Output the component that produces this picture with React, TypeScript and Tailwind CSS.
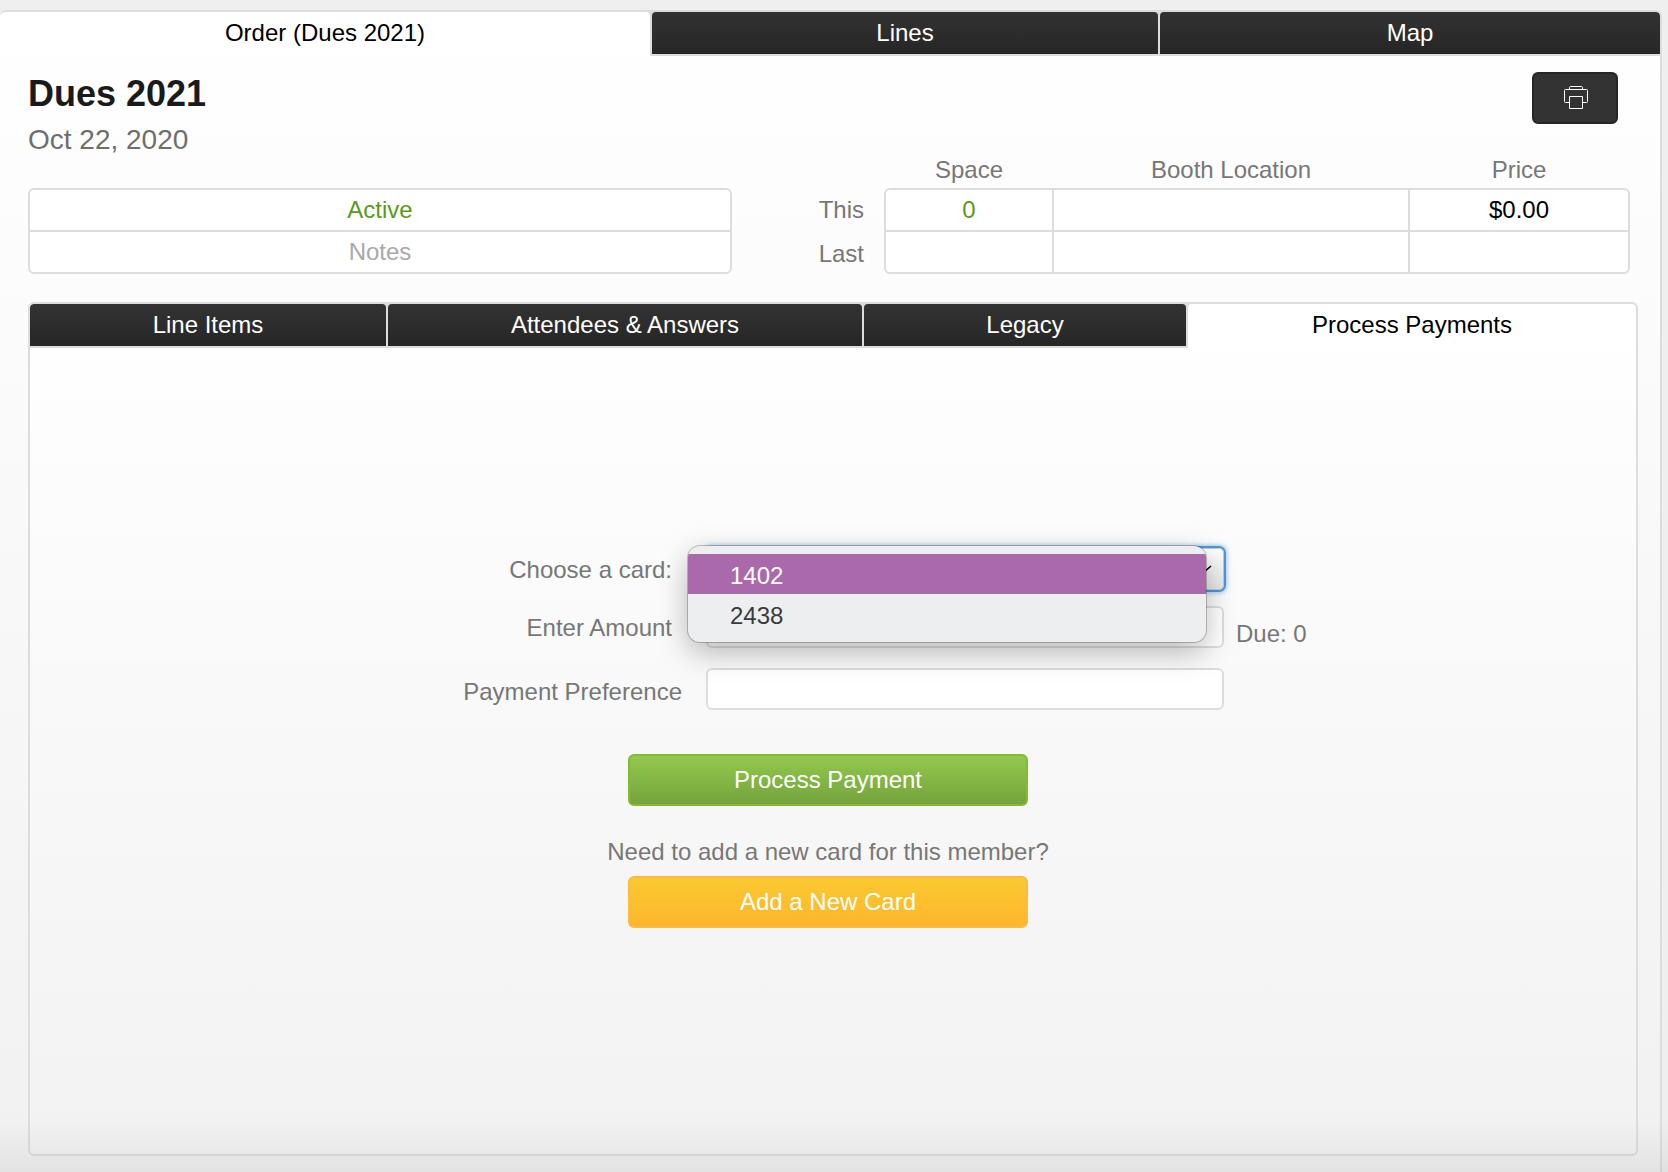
import React, { useState } from "react";
import clsx from "clsx";

interface Tab {
  id: string;
  label: string;
  grow: string;
}

const PAGE_TABS: Tab[] = [
  { id: "order", label: "Order (Dues 2021)", grow: "flex-[650]" },
  { id: "lines", label: "Lines", grow: "flex-[506]" },
  { id: "map", label: "Map", grow: "flex-[500]" }
];

const ORDER_TABS: Tab[] = [
  { id: "items", label: "Line Items", grow: "flex-[356]" },
  { id: "attendees", label: "Attendees & Answers", grow: "flex-[474]" },
  { id: "legacy", label: "Legacy", grow: "flex-[322]" },
  { id: "payments", label: "Process Payments", grow: "flex-[448]" }
];

const CARDS = ["1402", "2438"];

interface TabStripProps {
  tabs: Tab[];
  active: string;
  onSelect: (id: string) => void;
}

function TabStrip({ tabs, active, onSelect }: TabStripProps) {
  return (
    <div role="tablist" className="flex h-11 gap-[2px] bg-[#dddddd]">
      {tabs.map((tab) => (
        <button
          key={tab.id}
          type="button"
          role="tab"
          aria-selected={tab.id === active}
          onClick={() => onSelect(tab.id)}
          className={clsx(
            "rounded-t-[4px] leading-10 whitespace-nowrap",
            tab.grow,
            tab.id === active
              ? "bg-white pb-[2px] text-black"
              : "mb-[2px] bg-gradient-to-b from-[#333333] to-[#262626] text-white"
          )}
        >
          {tab.label}
        </button>
      ))}
    </div>
  );
}

function PrintIcon() {
  return (
    <svg width="24" height="24" viewBox="0 0 24 24" fill="none" stroke="#ffffff" strokeWidth="1">
      <path d="M5.5 3V1.5a1 1 0 0 1 1-1h11a1 1 0 0 1 1 1V3" />
      <path d="M5 16.5H1.5a1 1 0 0 1-1-1v-11a1 1 0 0 1 1-1h21a1 1 0 0 1 1 1v11a1 1 0 0 1-1 1H19" />
      <path d="M5.5 10.5h13v12h-13z" />
    </svg>
  );
}

function SpaceTable() {
  const cell = "h-10 border-b-2 border-r-2 border-[#dddddd] bg-white p-0 text-center leading-10";
  const rowLabel = "p-0 pt-[2px] pr-5 text-right align-top font-normal leading-10";

  return (
    <table className="mt-6 w-full table-fixed border-separate border-spacing-0 text-[#777777]">
      <thead>
        <tr className="h-10">
          <td className="w-[152px] p-0" />
          <th scope="col" className="w-[170px] p-0 align-bottom font-normal leading-9">Space</th>
          <th scope="col" className="w-[356px] p-0 pr-[2px] align-bottom font-normal leading-9">Booth Location</th>
          <th scope="col" className="w-[220px] p-0 pr-[2px] align-bottom font-normal leading-9">Price</th>
        </tr>
      </thead>
      <tbody>
        <tr>
          <th scope="row" className={rowLabel}>This</th>
          <td className={clsx(cell, "rounded-tl-[6px] border-t-2 border-l-2 text-[#5a9a1c]")}>0</td>
          <td className={clsx(cell, "border-t-2")} />
          <td className={clsx(cell, "rounded-tr-[6px] border-t-2 text-black")}>$0.00</td>
        </tr>
        <tr>
          <th scope="row" className={rowLabel}>Last</th>
          <td className={clsx(cell, "rounded-bl-[6px] border-l-2")} />
          <td className={cell} />
          <td className={clsx(cell, "rounded-br-[6px]")} />
        </tr>
      </tbody>
    </table>
  );
}

function CardPicker() {
  const [card, setCard] = useState(CARDS[0]);

  return (
    <div className="relative">
      <select
        id="card"
        value={card}
        onChange={(e) => setCard(e.target.value)}
        className="block h-[42px] w-full appearance-none rounded-[5px] border border-[#c8c8c8] bg-gradient-to-b from-white to-[#e6e6e6] px-3 text-black shadow-[0_0_0_2px_#4a97e0,0_0_4px_3px_rgba(74,151,224,0.5)] outline-none"
      >
        {CARDS.map((c) => (
          <option key={c} value={c}>{c}</option>
        ))}
      </select>
      <svg
        className="pointer-events-none absolute top-[17px] right-3 h-2 w-4"
        viewBox="0 0 16 8"
        fill="none"
        stroke="#000000"
        strokeWidth="1.6"
      >
        <path d="M1 1l7 6 7-6" />
      </svg>

      {/* Open option list */}
      <ul
        role="listbox"
        aria-label="Cards"
        className="absolute -top-[2px] -left-[18px] z-10 w-full overflow-hidden rounded-[12px] bg-[#edeef0] py-2 shadow-[0_0_0_1px_rgba(0,0,0,0.22),0_10px_30px_rgba(0,0,0,0.28)]"
      >
        {CARDS.map((c) => (
          <li
            key={c}
            role="option"
            aria-selected={c === card}
            onClick={() => setCard(c)}
            className={clsx(
              "h-10 pl-[42px] leading-[44px]",
              c === card ? "bg-[#aa69aa] text-white" : "text-[#3a3a3a]"
            )}
          >
            {c}
          </li>
        ))}
      </ul>
    </div>
  );
}

function PaymentForm() {
  const label = "pt-[2px] pr-[34px] text-right leading-10";
  const field = "h-[42px] w-full rounded-[6px] border-2 border-[#dddddd] bg-white px-3 text-black outline-none";

  return (
    <form className="pt-[200px] pb-[226px] text-[#777777]" onSubmit={(e) => e.preventDefault()}>
      <div className="grid grid-cols-[169fr_518px_103fr]">
        <label htmlFor="card" className={label}>Choose a card:</label>
        <CardPicker />
        <span />
      </div>
      <div className="mt-4 grid grid-cols-[169fr_518px_103fr]">
        <label htmlFor="amount" className={label}>Enter Amount</label>
        <input id="amount" type="text" className={field} />
        <span className="-mb-2 pt-2 pl-3 leading-10">Due: 0</span>
      </div>
      <div className="mt-5 grid grid-cols-[169fr_518px_103fr]">
        <label htmlFor="preference" className="-mb-1 pt-1 pr-6 text-right leading-10">
          Payment Preference
        </label>
        <input id="preference" type="text" className={field} />
        <span />
      </div>

      <div className="mt-11 flex flex-col items-center pr-[10px]">
        <button
          type="submit"
          className="h-[52px] w-[400px] rounded-[6px] border-2 border-[#86bb30] bg-gradient-to-b from-[#92c84e] to-[#75a43c] text-white"
        >
          Process Payment
        </button>
        <p className="mt-[26px] leading-10">Need to add a new card for this member?</p>
        <button
          type="button"
          className="mt-1 h-[52px] w-[400px] rounded-[6px] border-2 border-[#fbbc3f] bg-gradient-to-b from-[#fac931] to-[#fdb62c] text-white"
        >
          Add a New Card
        </button>
      </div>
    </form>
  );
}

export default function App() {
  const [pageTab, setPageTab] = useState("order");
  const [orderTab, setOrderTab] = useState("payments");

  return (
    <div className="relative flex min-h-screen flex-col bg-[#efefef] pt-[10px] pr-[6px] font-['Liberation_Sans',Arial,sans-serif] text-[24px]">
      <main className="flex-1 overflow-hidden rounded-t-[6px] border-t-2 border-r-2 border-[#dddddd] bg-gradient-to-b from-white to-[#f1f1f1] pb-4">
        <TabStrip tabs={PAGE_TABS} active={pageTab} onSelect={setPageTab} />

        <div className="grid grid-cols-[704fr_898fr] pt-[14px] pr-[30px] pl-7">
          <div>
            <h1 className="text-[36px] leading-[48px] font-bold text-[#1a1a1a]">Dues 2021</h1>
            <p className="mt-[2px] text-[28px] leading-10 text-[#6e6e6e]">Oct 22, 2020</p>
            <div className="mt-7 overflow-hidden rounded-[6px] border-2 border-[#dddddd] bg-white text-center">
              <div className="border-b-2 border-[#dddddd] leading-10 text-[#5a9a1c]">Active</div>
              <input
                type="text"
                aria-label="Notes"
                placeholder="Notes"
                className="block h-10 w-full text-center leading-10 outline-none placeholder:text-[#a9a9a9]"
              />
            </div>
          </div>

          <div className="flex flex-col items-end pt-[2px]">
            <button
              type="button"
              aria-label="Print"
              className="mr-3 flex h-[52px] w-[86px] items-center justify-center rounded-[6px] border-2 border-[#262626] bg-[#333333] pl-[2px]"
            >
              <PrintIcon />
            </button>
            <SpaceTable />
          </div>
        </div>

        <section className="mt-7 mr-[22px] ml-7 overflow-hidden rounded-[6px] border-2 border-[#dddddd] bg-gradient-to-b from-white to-[#f2f2f2]">
          <TabStrip tabs={ORDER_TABS} active={orderTab} onSelect={setOrderTab} />
          <PaymentForm />
        </section>
      </main>

      {/* Shade along the bottom edge */}
      <div className="pointer-events-none absolute inset-x-0 bottom-0 h-14 bg-gradient-to-b from-transparent to-black/6" />
    </div>
  );
}
